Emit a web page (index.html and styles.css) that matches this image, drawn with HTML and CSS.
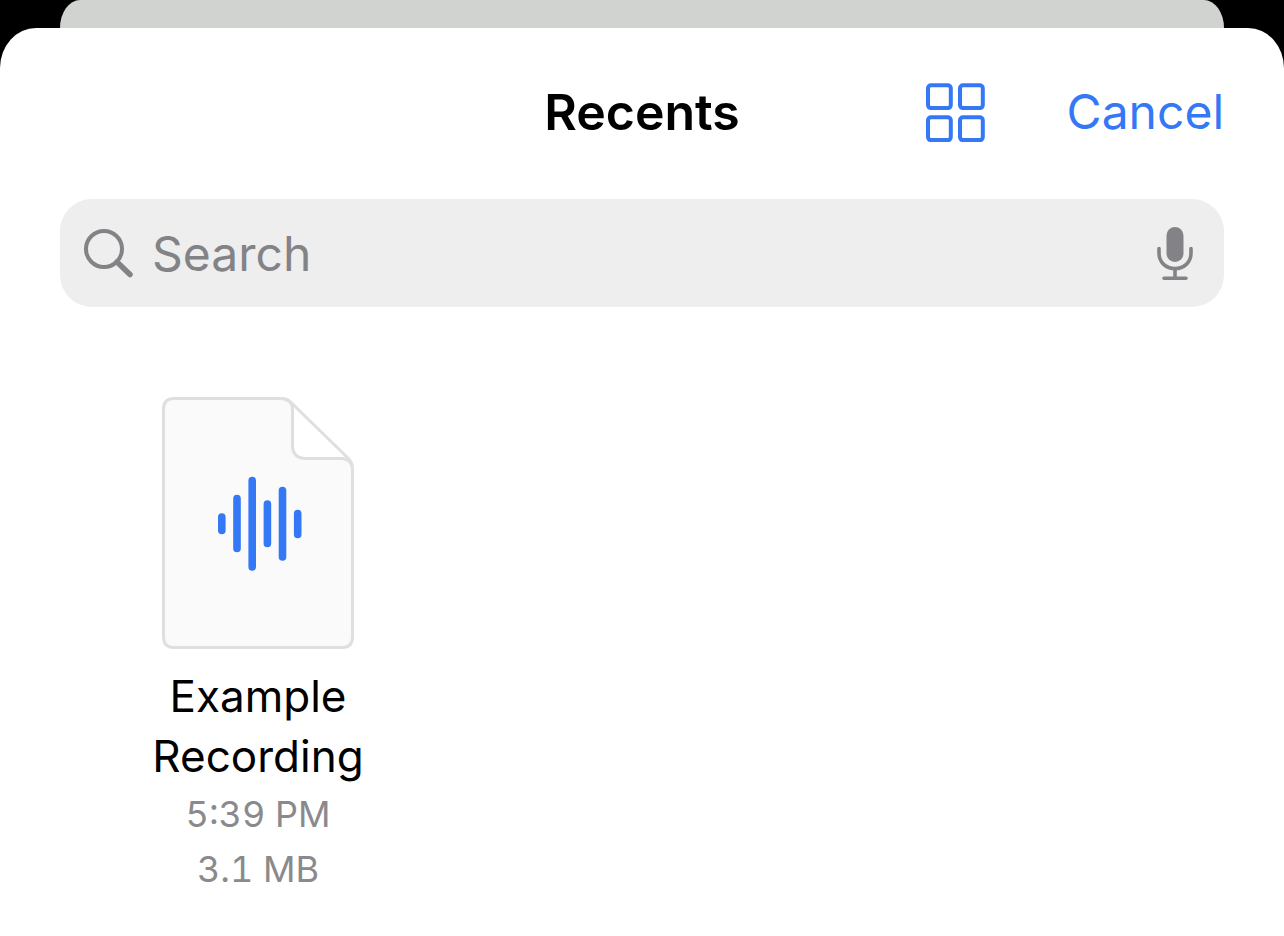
FILE: index.html
```html
<!DOCTYPE html>
<html lang="en">
<head>
<meta charset="utf-8">
<meta name="viewport" content="width=device-width, initial-scale=1">
<title>Recents</title>
<link rel="stylesheet" href="styles.css">
</head>
<body>
<div class="backdrop-card"></div>
<main class="sheet">
  <header class="toolbar">
    <h1 class="title">Recents</h1>
    <div class="actions">
      <button class="icon-button" type="button" aria-label="Change view">
        <svg width="60" height="60" viewBox="0 0 60 60" fill="none" stroke="currentColor" stroke-width="4" aria-hidden="true">
          <rect x="3" y="3.3" width="22.8" height="22.8" rx="3"/>
          <rect x="35" y="3.3" width="22.8" height="22.8" rx="3"/>
          <rect x="3" y="35.3" width="22.8" height="22.8" rx="3"/>
          <rect x="35" y="35.3" width="22.8" height="22.8" rx="3"/>
        </svg>
      </button>
      <button class="cancel" type="button">Cancel</button>
    </div>
  </header>

  <form class="search" role="search">
    <svg class="search-icon" width="52" height="52" viewBox="0 0 52 52" fill="none" stroke="currentColor" stroke-linecap="round" aria-hidden="true">
      <circle cx="22" cy="22" r="18" stroke-width="4"/>
      <path d="M35 35L48 47.500" stroke-width="5.500"/>
    </svg>
    <input class="search-input" type="search" placeholder="Search" aria-label="Search">
    <button class="icon-button" type="button" aria-label="Dictate">
      <svg width="40" height="56" viewBox="0 0 40 56" fill="none" stroke="currentColor" stroke-width="3.600" stroke-linecap="round" aria-hidden="true">
        <rect x="11.500" y="2" width="17" height="35" rx="8.500" fill="currentColor" stroke="none"/>
        <path d="M4 23.500V28C4 37.500 11 43.500 20 43.500S36 37.500 36 28V23.500M20 43.500V53M9 53.200H31"/>
      </svg>
    </button>
  </form>

  <ul class="files">
    <li>
      <a class="file" href="#">
        <svg width="192" height="252" viewBox="0 0 192 252" fill="none" stroke="#dfdfdf" stroke-width="3" stroke-linejoin="round" aria-hidden="true">
          <path fill="#fafafa" d="M12 1.500H119Q130.500 1.500 130.500 13V48Q130.500 61.500 144 61.500H179Q190.500 61.500 190.500 74V240Q190.500 250.500 180 250.500H12Q1.500 250.500 1.500 240V12Q1.500 1.500 12 1.500Z"/>
          <path d="M122 1.800Q126 2.500 129 5.500L186 61Q190 65 190.500 70"/>
          <g stroke="#3478f6" stroke-width="7.600" stroke-linecap="round">
            <path d="M59.800 120V133.500M75 101.500V151.500M90.200 83.500V170M105.400 107V146.500M120.500 93.500V160M135.700 116.500V137.500"/>
          </g>
        </svg>
        <span class="name">Example Recording</span>
        <span class="meta">5:39 PM</span>
        <span class="meta">3.1 MB</span>
      </a>
    </li>
  </ul>
</main>
</body>
</html>
```
FILE: styles.css
```css
* {
  box-sizing: border-box;
}

body {
  margin: 0;
  min-height: 100vh;
  display: flex;
  flex-direction: column;
  background: #000;
  color: #000;
  font-family: Inter, "Liberation Sans", sans-serif;
}

button,
input {
  font: inherit;
}

button {
  padding: 0;
  border: 0;
  background: none;
  color: inherit;
  cursor: pointer;
}

svg {
  display: block;
  flex: none;
}

.backdrop-card {
  height: 28px;
  margin: 0 60px;
  border-radius: 20px 20px 0 0 / 28px 28px 0 0;
  background: #d1d3d0;
}

.sheet {
  flex: 1;
  padding: 0 60px 40px;
  border-radius: 36px 36px 0 0 / 40px 40px 0 0;
  background: #fff;
}

.toolbar {
  display: grid;
  grid-template-columns: 1fr auto 1fr;
  align-items: center;
  padding: 54px 0 57px;
  font-size: 50px;
  line-height: 60px;
}

.title {
  grid-column: 2;
  margin: 0;
  font-size: inherit;
  font-weight: 600;
}

.actions {
  display: flex;
  justify-content: flex-end;
  align-items: center;
  gap: 82px;
  color: #3478f6;
}

.cancel {
  font-size: 48px;
}

.search {
  display: flex;
  align-items: center;
  gap: 18px;
  height: 108px;
  padding: 0 29px 0 22px;
  border-radius: 32px;
  background: #eee;
  color: #838387;
}

.search-input {
  flex: 1;
  min-width: 0;
  padding: 2px 0 0;
  border: 0;
  outline: 0;
  background: none;
  color: #000;
  font-size: 48px;
  line-height: 60px;
  appearance: none;
}

.search-input::placeholder {
  color: #838387;
  opacity: 1;
}

.files {
  display: grid;
  grid-template-columns: repeat(3, 1fr);
  margin: 90px 6px 0;
  padding: 0;
  list-style: none;
}

.file {
  display: flex;
  flex-direction: column;
  align-items: center;
  color: inherit;
  text-align: center;
  text-decoration: none;
}

.name {
  width: min-content;
  margin: 17px 0 1px;
  font-size: 44px;
  line-height: 60px;
}

.meta {
  color: #8a8a8c;
  font-size: 36px;
  font-variant-numeric: tabular-nums;
  line-height: 55px;
}
```
